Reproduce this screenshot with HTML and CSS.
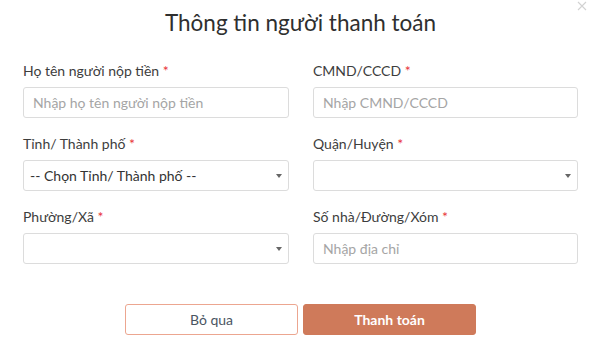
FILE: index.html
```html
<!DOCTYPE html>
<html lang="vi">
<head>
  <meta charset="UTF-8">
  <meta name="viewport" content="width=device-width, initial-scale=1.0">
  <title>Thông tin người thanh toán</title>
  <link rel="stylesheet" href="styles.css">
</head>
<body>
  <div class="modal">
    <span class="close">
      <svg width="10" height="10" viewBox="0 0 10 10">
        <path d="M1 1 L9 9 M9 1 L1 9" stroke="#d2d2d2" stroke-width="1.1" fill="none"/>
      </svg>
    </span>
    <h2 class="modal-title">Thông tin người thanh toán</h2>

    <form class="payer-form">
      <div class="field">
        <label>Họ tên người nộp tiền <span class="req">*</span></label>
        <input type="text" placeholder="Nhập họ tên người nộp tiền">
      </div>
      <div class="field">
        <label>CMND/CCCD <span class="req">*</span></label>
        <input type="text" placeholder="Nhập CMND/CCCD">
      </div>

      <div class="field">
        <label>Tỉnh/ Thành phố <span class="req">*</span></label>
        <div class="select-wrap">
          <select>
            <option>-- Chọn Tỉnh/ Thành phố --</option>
          </select>
        </div>
      </div>
      <div class="field">
        <label>Quận/Huyện <span class="req">*</span></label>
        <div class="select-wrap">
          <select>
            <option></option>
          </select>
        </div>
      </div>

      <div class="field">
        <label>Phường/Xã <span class="req">*</span></label>
        <div class="select-wrap">
          <select>
            <option></option>
          </select>
        </div>
      </div>
      <div class="field">
        <label>Số nhà/Đường/Xóm <span class="req">*</span></label>
        <input type="text" placeholder="Nhập địa chỉ">
      </div>
    </form>

    <div class="actions">
      <button type="button" class="btn btn-outline">Bỏ qua</button>
      <button type="button" class="btn btn-primary">Thanh toán</button>
    </div>
  </div>
</body>
</html>
```

FILE: styles.css
```css
body {
  margin: 0;
  background: #fff;
  font-family: Lato, "Open Sans", sans-serif;
  color: #3a3a3a;
}

.modal {
  position: relative;
  width: 600px;
  height: 350px;
  box-sizing: border-box;
  padding: 8px 22px 0 23px;
  overflow: hidden;
}

.close {
  position: absolute;
  top: 1px;
  right: 13px;
  line-height: 0;
}

.modal-title {
  margin: 0;
  font-size: 22.5px;
  font-weight: 400;
  line-height: 30px;
  text-align: center;
  color: #2f2f2f;
}

.payer-form {
  display: grid;
  grid-template-columns: 266px 265px;
  column-gap: 24px;
  row-gap: 18px;
  margin-top: 25px;
}

.field label {
  display: block;
  font-size: 14px;
  line-height: 16px;
  margin-bottom: 8px;
  color: #3d3d3d;
}

.req {
  color: #e8343a;
}

.field input,
.field select {
  display: block;
  width: 100%;
  height: 31px;
  box-sizing: border-box;
  padding: 0 9px;
  border: 1px solid #dcdcdc;
  border-radius: 3px;
  background: #fff;
  font-family: inherit;
  font-size: 14px;
  color: #333;
  outline: none;
}

.field input::placeholder {
  color: #a5a5a5;
}

.field select {
  appearance: none;
  -webkit-appearance: none;
  padding-left: 6px;
}

.select-wrap {
  position: relative;
}

.select-wrap::after {
  content: "";
  position: absolute;
  right: 7px;
  top: 14px;
  border-left: 3px solid transparent;
  border-right: 3px solid transparent;
  border-top: 4px solid #666;
}

.actions {
  display: flex;
  justify-content: center;
  gap: 5px;
  margin-top: 40px;
}

.btn {
  width: 173px;
  height: 31px;
  border-radius: 3px;
  font-family: inherit;
  font-size: 14px;
  cursor: pointer;
}

.btn-outline {
  background: #fff;
  border: 1px solid #eca690;
  color: #4a5562;
}

.btn-primary {
  background: #cf7a5a;
  border: 1px solid #cf7a5a;
  color: #fff;
  font-weight: 700;
}
```
